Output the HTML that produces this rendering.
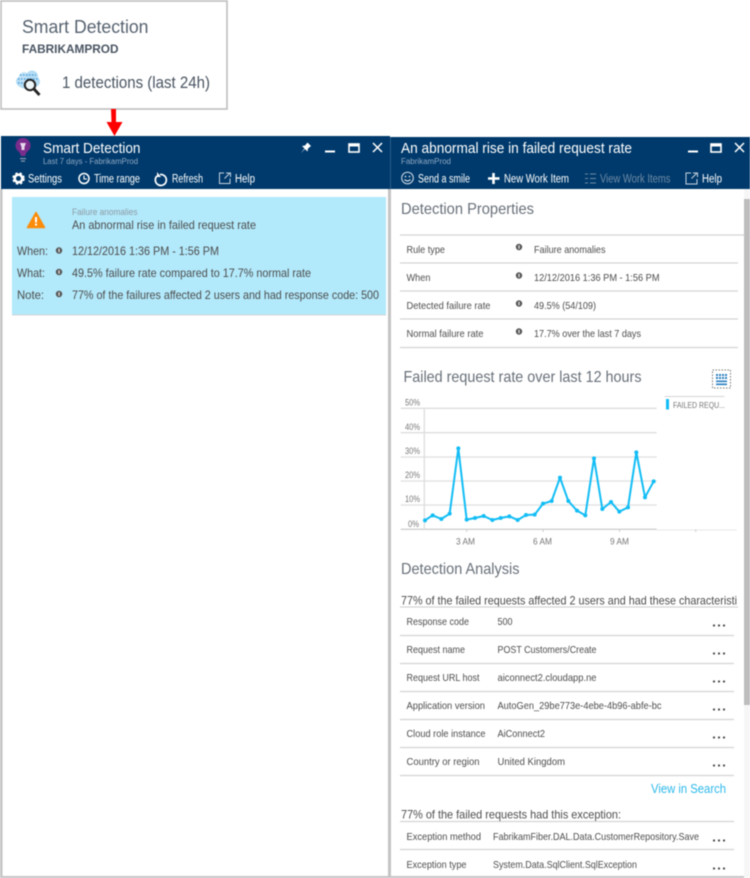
<!DOCTYPE html>
<html><head><meta charset="utf-8"><style>
html,body{margin:0;padding:0;background:#fff;width:750px;height:878px;overflow:hidden}
svg{display:block;filter:blur(.4px)}
text{font-family:"Liberation Sans",sans-serif;fill:#4d4d4d}
.w{fill:#fff}
.h{fill:#687079}
.l{stroke:#d4d4d4;stroke-width:1.300}
</style></head><body>
<svg width="750" height="878" viewBox="0 0 750 878" xmlns="http://www.w3.org/2000/svg">
<defs><g id="i"><circle r="3.200" fill="#555"/><rect x="-.7" y="-1.800" width="1.400" height="3.600" fill="#ddd"/></g>
<g id="d"><circle cx="-5" r="1.100" fill="#444"/><circle cx="0" r="1.100" fill="#444"/><circle cx="5" r="1.100" fill="#444"/></g></defs>

<!-- top card -->
<rect x="1" y="1" width="226" height="108" fill="#fff" stroke="#bdbdbd" stroke-width="1.600"/>
<text x="22" y="33" font-size="18" textLength="126.500" lengthAdjust="spacingAndGlyphs" style="fill:#566270">Smart Detection</text>
<text x="22" y="53" font-size="11.500" font-weight="bold" textLength="96.500" lengthAdjust="spacingAndGlyphs" style="fill:#4a5562">FABRIKAMPROD</text>
<g><ellipse cx="28" cy="81.500" rx="12" ry="7.500" fill="#b4dcf4"/><circle cx="24" cy="77" r="5" fill="#c2e2f6"/><circle cx="32" cy="76.500" r="6" fill="#b4dcf4"/>
<path d="M20 75h16M18 79h20M18 83h6" stroke="#3f96d8" stroke-width="1.300" stroke-dasharray="1.500 1.500"/>
<circle cx="30" cy="85" r="5.200" fill="#eef6fa" stroke="#222" stroke-width="2"/><path d="M34 89l5.500 6" stroke="#222" stroke-width="2.800"/></g>
<text x="62" y="88" font-size="16.500" textLength="148" lengthAdjust="spacingAndGlyphs" style="fill:#4a5562">1 detections (last 24h)</text>

<!-- arrow -->
<path d="M111 109h5v13h6.500l-8 14-8-14h5z" fill="#f00"/>

<!-- headers -->
<rect x="1" y="136" width="389" height="53" fill="#003a6c"/>
<rect x="390" y="137" width="360" height="52" fill="#003a6c"/>
<rect x="390" y="137" width="1" height="52" fill="#2a5c88"/>

<!-- pane edges -->
<rect x="0" y="189" width="2.500" height="689" fill="#c4c4c4"/>
<rect x="388" y="189" width="3" height="689" fill="#c4c4c4"/>
<rect x="0" y="876" width="750" height="2" fill="#c4c4c4"/>
<rect x="744" y="189" width="6" height="689" fill="#f6f6f6"/>
<rect x="744" y="199" width="6" height="506" fill="#bdbdbd"/>

<!-- left header content -->
<circle cx="23" cy="145.500" r="7.500" fill="#7a2d8c"/><path d="M19 151h8l-2 5h-4z" fill="#7a2d8c"/>
<path d="M20 143h6l-1.500 4v3h-3v-3z" fill="#e8d8ec"/>
<rect x="20" y="158" width="6" height="1.200" fill="#8a9ab0"/><rect x="21" y="160.500" width="4" height="1.200" fill="#8a9ab0"/>
<text class="w" x="43" y="153" font-size="15" textLength="97.500" lengthAdjust="spacingAndGlyphs">Smart Detection</text>
<text x="43" y="164" font-size="8" textLength="95" lengthAdjust="spacingAndGlyphs" style="fill:#8fa8c4">Last 7 days - FabrikamProd</text>
<path d="M301 153l3.500-4.500-2.500-2.500 3-.5 2.500-3 3.500 3.500-3 2.500-.5 3-2.500-2.500z" fill="#fff"/>
<rect x="325" y="150.500" width="10" height="2" fill="#fff"/>
<rect x="349" y="144" width="10" height="8" fill="none" stroke="#fff" stroke-width="1.600"/><rect x="349" y="144" width="10" height="2.500" fill="#fff"/>
<path d="M373 143l9 9M382 143l-9 9" stroke="#fff" stroke-width="1.500"/>

<!-- left toolbar -->
<g transform="translate(18.500 178.500)"><circle r="3.800" fill="none" stroke="#fff" stroke-width="2.600"/><circle r="5.400" fill="none" stroke="#fff" stroke-width="1.700" stroke-dasharray="2.400 2"/></g>
<text class="w" x="28" y="182.500" font-size="11.500" textLength="34" lengthAdjust="spacingAndGlyphs">Settings</text>
<circle cx="84" cy="178.500" r="5" fill="none" stroke="#fff" stroke-width="1.500"/><path d="M84 175.500v3.500h3" fill="none" stroke="#fff" stroke-width="1.100"/>
<text class="w" x="94" y="182.500" font-size="11.500" textLength="46" lengthAdjust="spacingAndGlyphs">Time range</text>
<path d="M160 174.500a5.500 5.500 0 1 1-3 1.500" fill="none" stroke="#fff" stroke-width="1.700"/><path d="M157 172v5h4z" fill="#fff"/>
<text class="w" x="172" y="182.500" font-size="11.500" textLength="31" lengthAdjust="spacingAndGlyphs">Refresh</text>
<path d="M224 173h-4.500v10.500h10.500v-5M224.500 178.500l5-5M226 173h4.500v4" fill="none" stroke="#c8d4e0" stroke-width="1"/>
<text class="w" x="235" y="182.500" font-size="11.500" textLength="20" lengthAdjust="spacingAndGlyphs">Help</text>

<!-- alert card -->
<rect x="12" y="197" width="374" height="117.500" fill="#b2e9fb"/>
<rect x="12" y="314.500" width="374" height="1" fill="#d4d4d4"/>
<path d="M36 212.500l8.500 15h-17z" fill="#fb8c0a" stroke="#fb8c0a" stroke-width="1.500" stroke-linejoin="round"/><rect x="35" y="217" width="2" height="5.500" fill="#fff"/><rect x="35" y="223.500" width="2" height="2" fill="#fff"/>
<text x="72" y="215" font-size="9" textLength="65.500" lengthAdjust="spacingAndGlyphs" style="fill:#8c9aa2">Failure anomalies</text>
<text x="72" y="229" font-size="12" textLength="184" lengthAdjust="spacingAndGlyphs">An abnormal rise in failed request rate</text>
<text x="17" y="255" font-size="12" textLength="31" lengthAdjust="spacingAndGlyphs">When:</text>
<text x="17" y="277" font-size="12" textLength="28" lengthAdjust="spacingAndGlyphs">What:</text>
<text x="17" y="299" font-size="12" textLength="27" lengthAdjust="spacingAndGlyphs">Note:</text>
<use href="#i" x="59" y="250.500"/><use href="#i" x="59" y="272"/><use href="#i" x="59" y="294"/>
<text x="72" y="255" font-size="12" textLength="147" lengthAdjust="spacingAndGlyphs">12/12/2016 1:36 PM - 1:56 PM</text>
<text x="72" y="277" font-size="12" textLength="239" lengthAdjust="spacingAndGlyphs">49.5% failure rate compared to 17.7% normal rate</text>
<text x="72" y="299" font-size="12" textLength="307" lengthAdjust="spacingAndGlyphs">77% of the failures affected 2 users and had response code: 500</text>

<!-- right header content -->
<text class="w" x="401" y="153" font-size="15" textLength="231" lengthAdjust="spacingAndGlyphs">An abnormal rise in failed request rate</text>
<text x="401" y="164" font-size="8" textLength="50" lengthAdjust="spacingAndGlyphs" style="fill:#8fa8c4">FabrikamProd</text>
<rect x="688" y="150.500" width="10" height="2" fill="#fff"/>
<rect x="711" y="144" width="10" height="8" fill="none" stroke="#fff" stroke-width="1.600"/><rect x="711" y="144" width="10" height="2.500" fill="#fff"/>
<path d="M735 143l9 9M744 143l-9 9" stroke="#fff" stroke-width="1.500"/>

<circle cx="407.500" cy="178" r="5.800" fill="none" stroke="#d8e2ec" stroke-width="1"/><circle cx="405.500" cy="176.500" r=".8" fill="#fff"/><circle cx="409.500" cy="176.500" r=".8" fill="#fff"/><path d="M404.500 179.500q3 3 6 0" fill="none" stroke="#fff" stroke-width=".9"/>
<text class="w" x="418" y="182.500" font-size="11.500" textLength="52" lengthAdjust="spacingAndGlyphs">Send a smile</text>
<path d="M493.500 173v11M488 178.500h11.500" stroke="#fff" stroke-width="2.600"/>
<text class="w" x="504" y="182.500" font-size="11.500" textLength="65" lengthAdjust="spacingAndGlyphs">New Work Item</text>
<path d="M590 174h6M590 178.500h6M590 183h6M585 174h3M585 178.500h3M585 183h3" stroke="#6f8ba6" stroke-width="1"/>
<text x="600" y="182.500" font-size="11.500" textLength="70.500" lengthAdjust="spacingAndGlyphs" style="fill:#6f8ba6">View Work Items</text>
<path d="M691 173h-5v11h11v-5M691.500 178.500l5-5M693 173h4.500v4" fill="none" stroke="#c8d4e0" stroke-width="1"/>
<text class="w" x="702" y="182.500" font-size="11.500" textLength="20" lengthAdjust="spacingAndGlyphs">Help</text>

<!-- Detection Properties -->
<text x="401" y="214" font-size="16" textLength="133" lengthAdjust="spacingAndGlyphs" class="h">Detection Properties</text>
<path class="l" d="M400 235h344M400 263h338M400 291h338M400 319h338M400 347.500h338"/>
<text x="406.500" y="253" font-size="10.500" textLength="38.500" lengthAdjust="spacingAndGlyphs">Rule type</text>
<text x="406.500" y="281" font-size="10.500" textLength="24" lengthAdjust="spacingAndGlyphs">When</text>
<text x="406.500" y="309" font-size="10.500" textLength="84" lengthAdjust="spacingAndGlyphs">Detected failure rate</text>
<text x="406.500" y="337" font-size="10.500" textLength="77" lengthAdjust="spacingAndGlyphs">Normal failure rate</text>
<text x="534" y="253" font-size="10.500" textLength="71.500" lengthAdjust="spacingAndGlyphs">Failure anomalies</text>
<text x="534" y="281" font-size="10.500" textLength="125.500" lengthAdjust="spacingAndGlyphs">12/12/2016 1:36 PM - 1:56 PM</text>
<text x="534" y="309" font-size="10.500" textLength="62" lengthAdjust="spacingAndGlyphs">49.5% (54/109)</text>
<text x="534" y="337" font-size="10.500" textLength="107" lengthAdjust="spacingAndGlyphs">17.7% over the last 7 days</text>
<use href="#i" x="519" y="247"/><use href="#i" x="519" y="275.500"/><use href="#i" x="519" y="303.500"/><use href="#i" x="519" y="331.500"/>

<!-- Chart -->
<text x="403.500" y="382" font-size="16" textLength="238" lengthAdjust="spacingAndGlyphs" class="h">Failed request rate over last 12 hours</text>
<rect x="712.500" y="370" width="18" height="18" fill="none" stroke="#777" stroke-width="1" stroke-dasharray="1.500 1.500"/>
<path d="M716 375h11M716 378h11" stroke="#2b7fc0" stroke-width="2" stroke-dasharray="2 1"/><rect x="716" y="380.500" width="11" height="1.600" fill="#2b7fc0"/><rect x="716" y="383.500" width="11" height="1.600" fill="#2b7fc0"/>
<rect x="664.500" y="396" width="60" height="1" fill="#d4d4d4"/>
<rect x="666" y="399" width="3" height="10.500" fill="#12bdf5"/>
<text x="673" y="408" font-size="8" textLength="52" lengthAdjust="spacingAndGlyphs" style="fill:#777">FAILED REQU...</text>
<g transform="translate(390 360) scale(.33333)">
<path d="M32 145H800M32 218H800M32 291H800M32 363H800M32 435H800" stroke="#dedede" stroke-width="4" fill="none"/>
<path d="M32 508H800" stroke="#d0d0d0" stroke-width="4"/><path d="M800 510H1040" stroke="#e8e8e8" stroke-width="3"/>
<path d="M103 145V508" stroke="#dedede" stroke-width="4"/>
<path d="M230 508v8M459 508v8M689 508v8M917 508v8" stroke="#ccc" stroke-width="3"/>
<polyline fill="none" stroke="#12bdf5" stroke-width="6" stroke-linejoin="round" points="105,481 128,466 154,477 179,461 205,265 230,479 255,474 281,468 307,480 332,474 358,469 383,480 408,465 434,464 459,431 485,423 510,353 535,423 561,452 586,466 612,295 637,447 663,426 688,455 714,442 739,277 765,412 791,364"/>
<g fill="#12bdf5"><circle cx="105" cy="481" r="6"/><circle cx="128" cy="466" r="6"/><circle cx="154" cy="477" r="6"/><circle cx="179" cy="461" r="6"/><circle cx="205" cy="265" r="6"/><circle cx="230" cy="479" r="6"/><circle cx="255" cy="474" r="6"/><circle cx="281" cy="468" r="6"/><circle cx="307" cy="480" r="6"/><circle cx="332" cy="474" r="6"/><circle cx="358" cy="469" r="6"/><circle cx="383" cy="480" r="6"/><circle cx="408" cy="465" r="6"/><circle cx="434" cy="464" r="6"/><circle cx="459" cy="431" r="6"/><circle cx="485" cy="423" r="6"/><circle cx="510" cy="353" r="6"/><circle cx="535" cy="423" r="6"/><circle cx="561" cy="452" r="6"/><circle cx="586" cy="466" r="6"/><circle cx="612" cy="295" r="6"/><circle cx="637" cy="447" r="6"/><circle cx="663" cy="426" r="6"/><circle cx="688" cy="455" r="6"/><circle cx="714" cy="442" r="6"/><circle cx="739" cy="277" r="6"/><circle cx="765" cy="412" r="6"/><circle cx="791" cy="364" r="6"/></g>
</g>
<text x="405" y="405.500" font-size="9" textLength="15" lengthAdjust="spacingAndGlyphs" style="fill:#777">50%</text>
<text x="405" y="430" font-size="9" textLength="15" lengthAdjust="spacingAndGlyphs" style="fill:#777">40%</text>
<text x="405" y="454" font-size="9" textLength="15" lengthAdjust="spacingAndGlyphs" style="fill:#777">30%</text>
<text x="405" y="478" font-size="9" textLength="15" lengthAdjust="spacingAndGlyphs" style="fill:#777">20%</text>
<text x="405" y="502" font-size="9" textLength="15" lengthAdjust="spacingAndGlyphs" style="fill:#777">10%</text>
<text x="408" y="527" font-size="9" textLength="11" lengthAdjust="spacingAndGlyphs" style="fill:#777">0%</text>
<text x="456" y="544.500" font-size="9" textLength="19" lengthAdjust="spacingAndGlyphs" style="fill:#777">3 AM</text>
<text x="533" y="544.500" font-size="9" textLength="19" lengthAdjust="spacingAndGlyphs" style="fill:#777">6 AM</text>
<text x="610" y="544.500" font-size="9" textLength="19" lengthAdjust="spacingAndGlyphs" style="fill:#777">9 AM</text>

<!-- Detection Analysis -->
<text x="401" y="574" font-size="16" textLength="118.500" lengthAdjust="spacingAndGlyphs" class="h">Detection Analysis</text>
<text x="401" y="604.500" font-size="12" textLength="336" lengthAdjust="spacingAndGlyphs">77% of the failed requests affected 2 users and had these characteristi</text>
<path class="l" d="M400 607h338M400 635.500h334M400 663.500h334M400 691.500h334M400 719.500h334M400 747.500h334M400 775.500h334M400 821.500h334M400 849.500h334"/>
<text x="406.500" y="625" font-size="10.500" textLength="62.500" lengthAdjust="spacingAndGlyphs">Response code</text>
<text x="406.500" y="653" font-size="10.500" textLength="58.500" lengthAdjust="spacingAndGlyphs">Request name</text>
<text x="406.500" y="681" font-size="10.500" textLength="73" lengthAdjust="spacingAndGlyphs">Request URL host</text>
<text x="406.500" y="709" font-size="10.500" textLength="78.500" lengthAdjust="spacingAndGlyphs">Application version</text>
<text x="406.500" y="737" font-size="10.500" textLength="79" lengthAdjust="spacingAndGlyphs">Cloud role instance</text>
<text x="406.500" y="765" font-size="10.500" textLength="73" lengthAdjust="spacingAndGlyphs">Country or region</text>
<text x="497.500" y="625" font-size="10.500" textLength="15" lengthAdjust="spacingAndGlyphs">500</text>
<text x="497.500" y="653" font-size="10.500" textLength="99" lengthAdjust="spacingAndGlyphs">POST Customers/Create</text>
<text x="497.500" y="681" font-size="10.500" textLength="99" lengthAdjust="spacingAndGlyphs">aiconnect2.cloudapp.ne</text>
<text x="497.500" y="709" font-size="10.500" textLength="164" lengthAdjust="spacingAndGlyphs">AutoGen_29be773e-4ebe-4b96-abfe-bc</text>
<text x="497.500" y="737" font-size="10.500" textLength="47.500" lengthAdjust="spacingAndGlyphs">AiConnect2</text>
<text x="497.500" y="765" font-size="10.500" textLength="67.500" lengthAdjust="spacingAndGlyphs">United Kingdom</text>
<use href="#d" x="719" y="625.500"/><use href="#d" x="719" y="653.500"/><use href="#d" x="719" y="681.500"/><use href="#d" x="719" y="709.500"/><use href="#d" x="719" y="737.500"/><use href="#d" x="719" y="765.500"/>
<text x="651" y="793" font-size="13" textLength="75" lengthAdjust="spacingAndGlyphs" style="fill:#2bb8ea">View in Search</text>
<text x="401" y="818.500" font-size="12" textLength="220" lengthAdjust="spacingAndGlyphs">77% of the failed requests had this exception:</text>
<text x="406.500" y="840" font-size="10.500" textLength="74.500" lengthAdjust="spacingAndGlyphs">Exception method</text>
<text x="406.500" y="868" font-size="10.500" textLength="60" lengthAdjust="spacingAndGlyphs">Exception type</text>
<text x="493" y="840" font-size="10.500" textLength="206" lengthAdjust="spacingAndGlyphs">FabrikamFiber.DAL.Data.CustomerRepository.Save</text>
<text x="493" y="868" font-size="10.500" textLength="144" lengthAdjust="spacingAndGlyphs">System.Data.SqlClient.SqlException</text>
<use href="#d" x="719" y="840.500"/><use href="#d" x="719" y="868.500"/>
</svg>
</body></html>
